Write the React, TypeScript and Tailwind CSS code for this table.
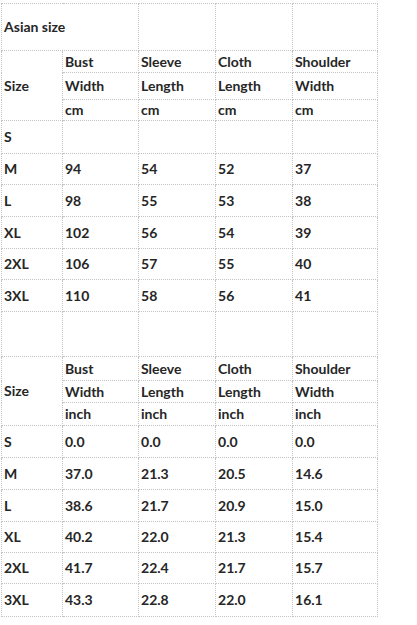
const cell = "border border-dotted border-[#c4c4c4] pl-[2px] pr-0 py-0 align-middle text-left";

const cmRows = [
  { size: "S", vals: ["", "", "", ""], h: "h-[33px]" },
  { size: "M", vals: ["94", "54", "52", "37"], h: "h-[31px]" },
  { size: "L", vals: ["98", "55", "53", "38"], h: "h-[32px]" },
  { size: "XL", vals: ["102", "56", "54", "39"], h: "h-[32px]" },
  { size: "2XL", vals: ["106", "57", "55", "40"], h: "h-[31px]" },
  { size: "3XL", vals: ["110", "58", "56", "41"], h: "h-[32px]" },
];

const inchRows = [
  { size: "S", vals: ["0.0", "0.0", "0.0", "0.0"], h: "h-[32px]" },
  { size: "M", vals: ["37.0", "21.3", "20.5", "14.6"], h: "h-[32px]" },
  { size: "L", vals: ["38.6", "21.7", "20.9", "15.0"], h: "h-[32px]" },
  { size: "XL", vals: ["40.2", "22.0", "21.3", "15.4"], h: "h-[31px]" },
  { size: "2XL", vals: ["41.7", "22.4", "21.7", "15.7"], h: "h-[31px]" },
  { size: "3XL", vals: ["43.3", "22.8", "22.0", "16.1"], h: "h-[33px]" },
];

function Header({ unit, heights }: { unit: string; heights: string[] }) {
  return (
    <>
      <tr className={heights[0]}>
        <td className={cell} rowSpan={3}>Size</td>
        <td className={cell}>Bust</td>
        <td className={cell}>Sleeve</td>
        <td className={cell}>Cloth</td>
        <td className={cell}>Shoulder</td>
      </tr>
      <tr className={heights[1]}>
        <td className={cell}>Width</td>
        <td className={cell}>Length</td>
        <td className={cell}>Length</td>
        <td className={cell}>Width</td>
      </tr>
      <tr className={heights[2]}>
        <td className={cell}>{unit}</td>
        <td className={cell}>{unit}</td>
        <td className={cell}>{unit}</td>
        <td className={cell}>{unit}</td>
      </tr>
    </>
  );
}

export default function App() {
  return (
    <div className="w-[417px] h-[625px] bg-white overflow-hidden pt-[3px] pl-[1px]">
      <table className="border-collapse table-fixed w-[376px] text-[14px] leading-none font-bold text-[#262626] [font-family:Lato,'Liberation_Sans',sans-serif]">
        <colgroup>
          <col className="w-[61px]" />
          <col className="w-[76px]" />
          <col className="w-[77px]" />
          <col className="w-[77px]" />
          <col className="w-[85px]" />
        </colgroup>
        <tbody>
          <tr className="h-[47px]">
            <td className={cell} colSpan={2}>Asian size</td>
            <td className={cell}></td>
            <td className={cell}></td>
            <td className={cell}></td>
          </tr>
          <Header unit="cm" heights={["h-[22px]", "h-[27px]", "h-[21px]"]} />
          {cmRows.map((r) => (
            <tr key={"cm" + r.size} className={r.h}>
              <td className={cell}>{r.size}</td>
              {r.vals.map((v, i) => (
                <td key={i} className={cell}>{v}</td>
              ))}
            </tr>
          ))}
          <tr className="h-[45px]">
            <td className={cell}></td>
            <td className={cell}></td>
            <td className={cell}></td>
            <td className={cell}></td>
            <td className={cell}></td>
          </tr>
          <Header unit="inch" heights={["h-[24px]", "h-[22px]", "h-[23px]"]} />
          {inchRows.map((r) => (
            <tr key={"in" + r.size} className={r.h}>
              <td className={cell}>{r.size}</td>
              {r.vals.map((v, i) => (
                <td key={i} className={cell}>{v}</td>
              ))}
            </tr>
          ))}
        </tbody>
      </table>
    </div>
  );
}
